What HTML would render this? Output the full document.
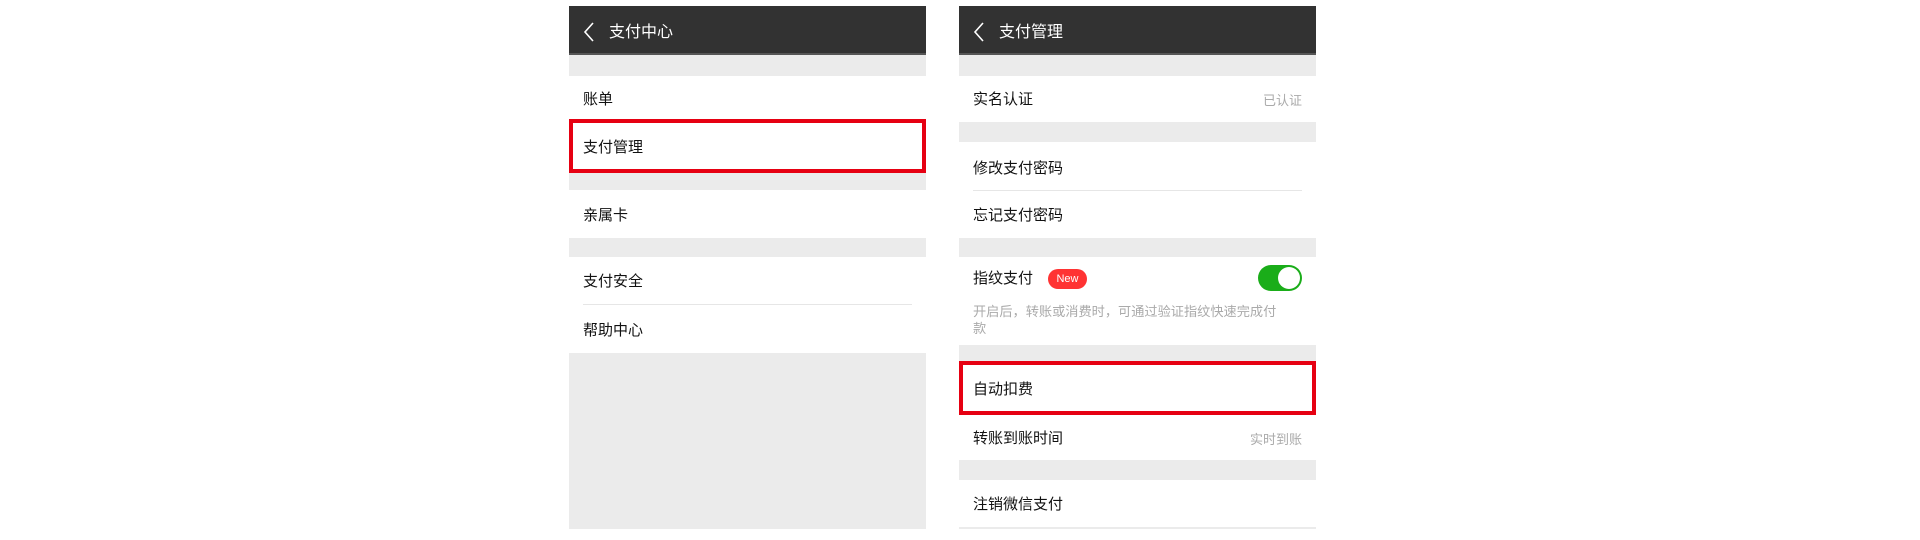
<!DOCTYPE html><html><head><meta charset="utf-8"><style>
*{margin:0;padding:0;box-sizing:border-box}
body{width:1920px;height:540px;background:#fff;position:relative;font-family:"Liberation Sans","Noto Sans CJK SC",sans-serif;overflow:hidden}
.p{position:absolute;top:6px;width:357px;height:523px;background:#ebebeb}
.hd{position:absolute;left:0;top:0;width:357px;height:49px;background:#323232;border-bottom:2px solid #555;color:#fff;font-size:16px;line-height:20px}
.hd span{position:absolute;left:40px;top:17px}
.hd svg{position:absolute;left:14px;top:16px}
.r{position:absolute;left:0;width:357px;background:#fff;font-size:15px;line-height:20px;color:#111}
.r .t{position:absolute;left:14px}
.r .v{position:absolute;right:14px;color:#aaa;font-size:13px}
.dv{position:absolute;left:14px;right:14px;height:1px;background:#e6e6e6}
.box{position:absolute;left:0;width:357px;border:4px solid #e60012}
</style></head><body>
<div class="p" style="left:569px">
<div class="hd"><svg width="12" height="20" viewBox="0 0 12 20"><path d="M10 1 L2 10 L10 19" stroke="#fff" stroke-width="1.6" fill="none"/></svg><span>支付中心</span></div>
<div class="r" style="top:70px;height:97px"><div class="t" style="top:14px">账单</div><div class="t" style="top:62px">支付管理</div></div>
<div class="box" style="top:113px;height:54px"></div>
<div class="r" style="top:184px;height:48px"><div class="t" style="top:16px">亲属卡</div></div>
<div class="r" style="top:251px;height:96px"><div class="t" style="top:15px">支付安全</div><div class="dv" style="top:47px"></div><div class="t" style="top:64px">帮助中心</div></div>
</div>
<div class="p" style="left:959px">
<div class="hd"><svg width="12" height="20" viewBox="0 0 12 20"><path d="M10 1 L2 10 L10 19" stroke="#fff" stroke-width="1.6" fill="none"/></svg><span>支付管理</span></div>
<div class="r" style="top:70px;height:46px"><div class="t" style="top:14px">实名认证</div><div class="v" style="top:15px">已认证</div></div>
<div class="r" style="top:136px;height:96px"><div class="t" style="top:17px">修改支付密码</div><div class="dv" style="top:48px"></div><div class="t" style="top:64px">忘记支付密码</div></div>
<div class="r" style="top:251px;height:88px"><div class="t" style="top:12px">指纹支付</div>
<div style="position:absolute;left:89px;top:12px;width:39px;height:20px;border-radius:10px;background:#f33;color:#fff;font-size:11px;text-align:center;line-height:20px">New</div>
<div style="position:absolute;left:299px;top:8px;width:44px;height:26px;border-radius:13px;background:#1aad19"><div style="position:absolute;right:2px;top:2px;width:22px;height:22px;border-radius:50%;background:#fff"></div></div>
<div style="position:absolute;left:14px;top:46px;width:310px;font-size:13.2px;line-height:17px;color:#aaa">开启后，转账或消费时，可通过验证指纹快速完成付款</div></div>
<div class="r" style="top:355px;height:99px"><div class="t" style="top:19px">自动扣费</div><div class="t" style="top:68px">转账到账时间</div><div class="v" style="top:69px">实时到账</div></div>
<div class="box" style="top:355px;height:54px"></div>
<div class="r" style="top:474px;height:47px"><div class="t" style="top:15px">注销微信支付</div></div>
</div>
</body></html>
